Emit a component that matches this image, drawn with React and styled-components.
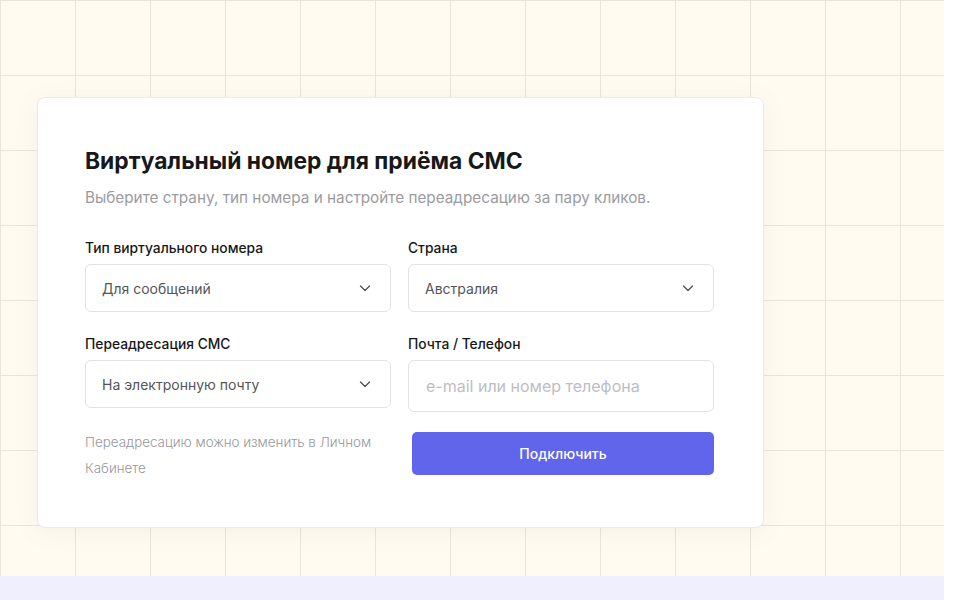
import React from "react";
import styled, { createGlobalStyle } from "styled-components";

const GlobalStyle = createGlobalStyle`
  * { box-sizing: border-box; }
  body {
    margin: 0;
    background: #ffffff;
    font-family: Inter, "Noto Sans", sans-serif;
  }
`;

function Chevron() {
  return (
    <svg width="14" height="14" viewBox="0 0 14 14" fill="none">
      <path
        d="M2.5 5L7 9.5L11.5 5"
        stroke="#555"
        strokeWidth="1.4"
        strokeLinecap="round"
        strokeLinejoin="round"
      />
    </svg>
  );
}

function Select({ value }) {
  return (
    <SelectBox>
      <span>{value}</span>
      <Chevron />
    </SelectBox>
  );
}

export default function App() {
  return (
    <>
      <GlobalStyle />
      <Page>
        <Hero>
          <Card>
            <Title>Виртуальный номер для приёма СМС</Title>
            <Subtitle>
              Выберите страну, тип номера и настройте переадресацию за пару
              кликов.
            </Subtitle>
            <Form>
              <Field>
                <Label>Тип виртуального номера</Label>
                <Select value="Для сообщений" />
              </Field>
              <Field>
                <Label>Страна</Label>
                <Select value="Австралия" />
              </Field>
              <Field>
                <Label>Переадресация СМС</Label>
                <Select value="На электронную почту" />
              </Field>
              <Field>
                <Label>Почта / Телефон</Label>
                <Input type="text" placeholder="e-mail или номер телефона" />
              </Field>
              <Note>Переадресацию можно изменить в Личном Кабинете</Note>
              <Button>Подключить</Button>
            </Form>
          </Card>
        </Hero>
        <Strip />
      </Page>
    </>
  );
}

const Page = styled.div`
  width: 944px;
  display: flex;
  flex-direction: column;
`;

const Hero = styled.section`
  height: 576px;
  padding: 97px 0 0 37px;
  background-color: #fffbf1;
  background-image:
    linear-gradient(to right, #e9e5da 1px, transparent 1px),
    linear-gradient(to bottom, #e9e5da 1px, transparent 1px);
  background-size: 75px 75px;
  background-position: 0 0;
`;

const Strip = styled.div`
  height: 24px;
  background: #f0effd;
`;

const Card = styled.div`
  width: 727px;
  height: 431px;
  padding: 48px 48px 0 47px;
  background: #ffffff;
  border: 1px solid #ecebe6;
  border-radius: 8px;
  box-shadow: 0 4px 24px rgba(120, 110, 80, 0.08);
`;

const Title = styled.h1`
  margin: 0;
  font-size: 22.8px;
  line-height: 30px;
  font-weight: 700;
  color: #17181a;
`;

const Subtitle = styled.p`
  margin: 10px 0 0;
  font-size: 15.3px;
  line-height: 24px;
  color: #9b9b9f;
`;

const Form = styled.div`
  margin-top: 28px;
  display: grid;
  grid-template-columns: 306px 306px;
  column-gap: 17px;
  row-gap: 22px;
`;

const Field = styled.div`
  display: flex;
  flex-direction: column;
`;

const Label = styled.label`
  font-size: 13.8px;
  line-height: 20px;
  font-weight: 500;
  color: #17181a;
  margin-bottom: 6px;
`;

const SelectBox = styled.div`
  height: 48px;
  padding: 0 18px 0 16px;
  display: flex;
  align-items: center;
  justify-content: space-between;
  border: 1px solid #e3e3e3;
  border-radius: 6px;
  font-size: 14px;
  color: #555559;
`;

const Input = styled.input`
  height: 52px;
  padding: 0 17px;
  border: 1px solid #e3e3e3;
  border-radius: 6px;
  font-family: inherit;
  font-size: 16px;
  color: #333;
  outline: none;
  &::placeholder {
    color: #bdbdc2;
  }
`;

const Note = styled.p`
  margin: -5px 0 0;
  font-size: 13.4px;
  line-height: 26px;
  font-weight: 300;
  color: #97979b;
`;

const Button = styled.button`
  margin: -2px 0 0 4px;
  height: 43px;
  border: none;
  border-radius: 5px;
  background: #6065ec;
  color: #ffffff;
  font-family: inherit;
  font-size: 14px;
  font-weight: 500;
  cursor: pointer;
`;
